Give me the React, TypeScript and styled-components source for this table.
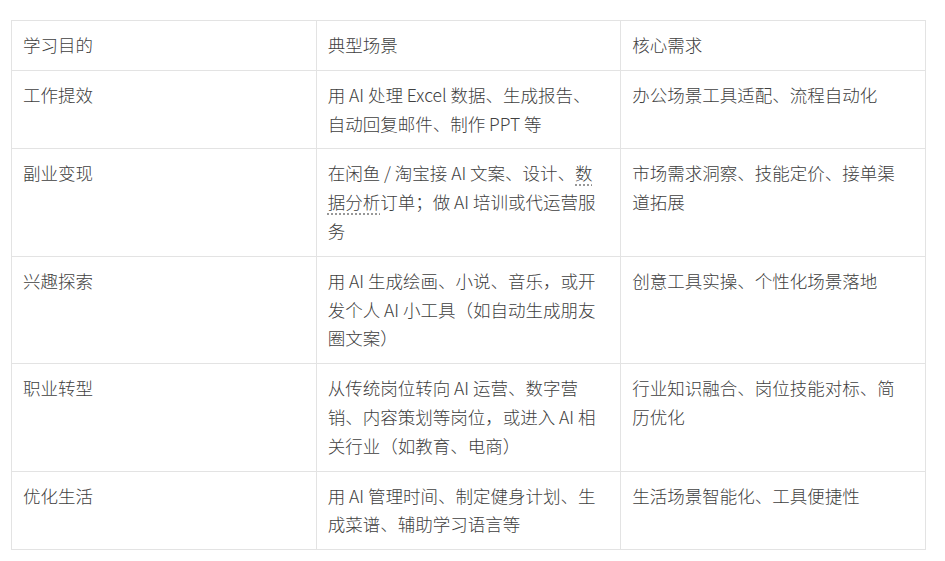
import styled, { createGlobalStyle } from "styled-components";

const GlobalStyle = createGlobalStyle`
  html, body {
    margin: 0;
    padding: 0;
    background: #ffffff;
  }
  body {
    font-family: "Noto Sans CJK SC", "Liberation Sans", sans-serif;
    color: #404040;
  }
`

const Page = styled.div`
  padding: 20px 19px 0 11px;
`

const Table = styled.table`
  width: 915px;
  border-collapse: collapse;
  table-layout: fixed;
  font-size: 17.5px;
  line-height: 28.8px;
`

const Cell = styled.td`
  border: 1px solid #e3e3e3;
  padding: 10px 11px;
  vertical-align: top;
  text-align: left;
  font-weight: 300;
  color: #404040;
`

const HeadCell = styled(Cell).attrs({ as: "th" })``

const Line = styled.span`
  display: block;
  white-space: nowrap;
`

const Marked = styled.span`
  text-decoration: underline dotted #8a8a8a;
  text-underline-offset: 4px;
`

// lines are split where the reference wraps them
const rows = [
  {
    goal: "工作提效",
    scene: ["用 AI 处理 Excel 数据、生成报告、", "自动回复邮件、制作 PPT 等"],
    need: ["办公场景工具适配、流程自动化"],
  },
  {
    goal: "副业变现",
    scene: [
      <>在闲鱼 / 淘宝接 AI 文案、设计、<Marked>数</Marked></>,
      <><Marked>据分析</Marked>订单；做 AI 培训或代运营服</>,
      "务",
    ],
    need: ["市场需求洞察、技能定价、接单渠", "道拓展"],
  },
  {
    goal: "兴趣探索",
    scene: ["用 AI 生成绘画、小说、音乐，或开", "发个人 AI 小工具（如自动生成朋友", "圈文案）"],
    need: ["创意工具实操、个性化场景落地"],
  },
  {
    goal: "职业转型",
    scene: ["从传统岗位转向 AI 运营、数字营", "销、内容策划等岗位，或进入 AI 相", "关行业（如教育、电商）"],
    need: ["行业知识融合、岗位技能对标、简", "历优化"],
  },
  {
    goal: "优化生活",
    scene: ["用 AI 管理时间、制定健身计划、生", "成菜谱、辅助学习语言等"],
    need: ["生活场景智能化、工具便捷性"],
  },
]

export default function App() {
  return (
    <Page>
      <GlobalStyle />
      <Table>
        <thead>
          <tr>
            <HeadCell>学习目的</HeadCell>
            <HeadCell>典型场景</HeadCell>
            <HeadCell>核心需求</HeadCell>
          </tr>
        </thead>
        <tbody>
          {rows.map((row) => (
            <tr key={row.goal}>
              <Cell>{row.goal}</Cell>
              <Cell>
                {row.scene.map((l, i) => <Line key={i}>{l}</Line>)}
              </Cell>
              <Cell>
                {row.need.map((l, i) => <Line key={i}>{l}</Line>)}
              </Cell>
            </tr>
          ))}
        </tbody>
      </Table>
    </Page>
  )
}
